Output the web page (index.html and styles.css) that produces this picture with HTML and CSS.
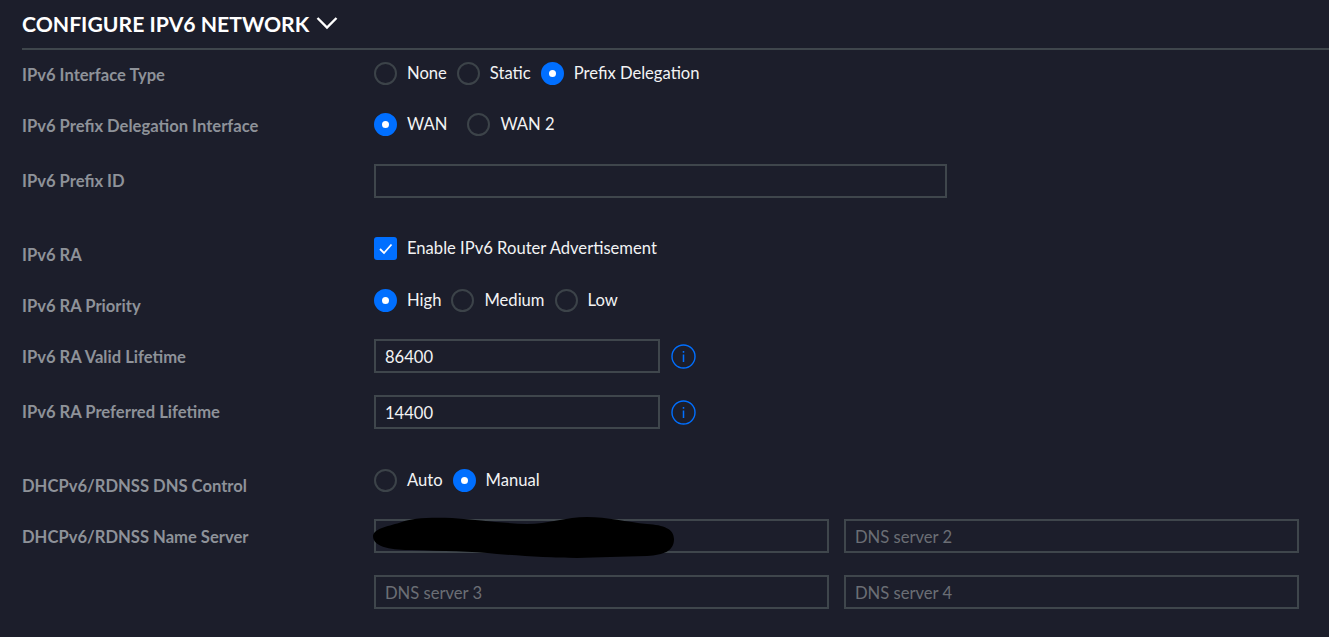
FILE: index.html
```html
<!DOCTYPE html>
<html lang="en">
<head>
  <meta charset="UTF-8" />
  <title>Configure IPv6 Network</title>
  <link rel="stylesheet" href="styles.css">
</head>
<body>

  <h2 class="section-title">
    CONFIGURE IPV6 NETWORK
    <svg class="chevron" viewBox="0 0 22 14" width="22" height="14"><path d="M1.5 2 11 11.5 20.5 2" fill="none" stroke="#fff" stroke-width="2.4"/></svg>
  </h2>

  <form class="form">
    <div class="label">IPv6 Interface Type</div>
    <div class="options">
      <span class="radio"></span><span class="opt">None</span>
      <span class="radio"></span><span class="opt">Static</span>
      <span class="radio on"></span><span class="opt">Prefix Delegation</span>
    </div>

    <div class="label">IPv6 Prefix Delegation Interface</div>
    <div class="options">
      <span class="radio on"></span><span class="opt wide">WAN</span>
      <span class="radio"></span><span class="opt">WAN 2</span>
    </div>

    <div class="label field-label">IPv6 Prefix ID</div>
    <div><div class="input full"></div></div>

    <div class="label low">IPv6 RA</div>
    <div class="options">
      <span class="check">
        <svg viewBox="0 0 23 23" width="23" height="23"><path d="M6 12 10 16 17.5 7.5" fill="none" stroke="#fff" stroke-width="1.8"/></svg>
      </span>
      <span class="opt">Enable IPv6 Router Advertisement</span>
    </div>

    <div class="label field-label">IPv6 RA Priority</div>
    <div class="options">
      <span class="radio on"></span><span class="opt">High</span>
      <span class="radio"></span><span class="opt">Medium</span>
      <span class="radio"></span><span class="opt">Low</span>
    </div>

    <div class="label low">IPv6 RA Valid Lifetime</div>
    <div class="with-info">
      <div class="input half">86400</div>
      <svg class="info" viewBox="0 0 25 25" width="25" height="25"><circle cx="12.5" cy="12.5" r="11.5" fill="none" stroke="#006fff" stroke-width="1.4"/><path d="M12.5 10.5v7.5M12.5 7v1.8" stroke="#006fff" stroke-width="1.5"/></svg>
    </div>

    <div class="label field-label">IPv6 RA Preferred Lifetime</div>
    <div class="with-info">
      <div class="input half">14400</div>
      <svg class="info" viewBox="0 0 25 25" width="25" height="25"><circle cx="12.5" cy="12.5" r="11.5" fill="none" stroke="#006fff" stroke-width="1.4"/><path d="M12.5 10.5v7.5M12.5 7v1.8" stroke="#006fff" stroke-width="1.5"/></svg>
    </div>

    <div class="label field-label">DHCPv6/RDNSS DNS Control</div>
    <div class="options">
      <span class="radio"></span><span class="opt">Auto</span>
      <span class="radio on"></span><span class="opt">Manual</span>
    </div>

    <div class="label low">DHCPv6/RDNSS Name Server</div>
    <div class="dns-pair">
      <div class="input dns"></div>
      <div class="input dns placeholder">DNS server 2</div>
      <!-- scribbled out in the screenshot -->
      <svg class="scribble" viewBox="0 0 304 44" width="304" height="44"><path d="M1 21C2 13 18 11 30 7C38 3 60 2 80 3C105 5 130 8 155 9C175 9 195 2 215 2C235 2 255 7 275 9C292 10 302 14 302 24C302 36 292 40 275 41C250 42 225 42 205 43C180 43 150 41 125 39C100 36 70 36 40 35C22 35 1 33 1 21Z" fill="#000"/></svg>
    </div>

    <div></div>
    <div class="dns-pair">
      <div class="input dns placeholder">DNS server 3</div>
      <div class="input dns placeholder">DNS server 4</div>
    </div>
  </form>

</body>
</html>
```

FILE: styles.css
```css
body {
  margin: 0;
  background: #1c1e2b;
  color: #f2f3f4;
  font-family: 'Lato', sans-serif;
  font-size: 16.6px;
  height: 637px;
  overflow: hidden;
}

.section-title {
  display: flex;
  align-items: center;
  gap: 7px;
  margin: 0 0 12px 22px;
  height: 47px;
  padding-bottom: 1px;
  box-sizing: content-box;
  border-bottom: 2px solid #3f464c;
  color: #fff;
  font-size: 21.2px;
  font-weight: 700;
}

.chevron {
  margin-top: -1px;
}

.form {
  display: grid;
  grid-template-columns: 352px 1fr;
  grid-template-rows: 51px 51px 73px 52px 50px 56px 74px 50px 56px 34px;
  padding-left: 22px;
}

.label {
  color: #8e9299;
  font-weight: 700;
  line-height: 26px;
}

.field-label {
  padding-top: 4px;
}

.low {
  padding-top: 5px;
}

.options {
  display: flex;
  align-items: flex-start;
  line-height: 22px;
}

.radio {
  box-sizing: border-box;
  flex: none;
  width: 23px;
  height: 23px;
  border: 2px solid #3c4349;
  border-radius: 50%;
}

.radio.on {
  border: 8px solid #006fff;
  background: #fff;
}

.check {
  flex: none;
  width: 23px;
  height: 23px;
  border-radius: 3px;
  background: #006fff;
}

.check svg {
  display: block;
}

.opt {
  margin: 0 10px;
}

.opt.wide {
  margin-right: 20px;
}

.input {
  box-sizing: border-box;
  height: 34px;
  padding-left: 9px;
  border: 2px solid #3f464c;
  line-height: 32px;
}

.full {
  width: 573px;
}

.half {
  width: 286px;
}

.with-info {
  display: flex;
  align-items: center;
  align-self: start;
  gap: 11px;
}

.dns-pair {
  position: relative;
  display: flex;
  align-self: start;
  gap: 15px;
}

.dns {
  width: 455px;
}

.placeholder {
  color: #6b6e75;
}

.scribble {
  position: absolute;
  left: -2px;
  top: -4px;
}
```
